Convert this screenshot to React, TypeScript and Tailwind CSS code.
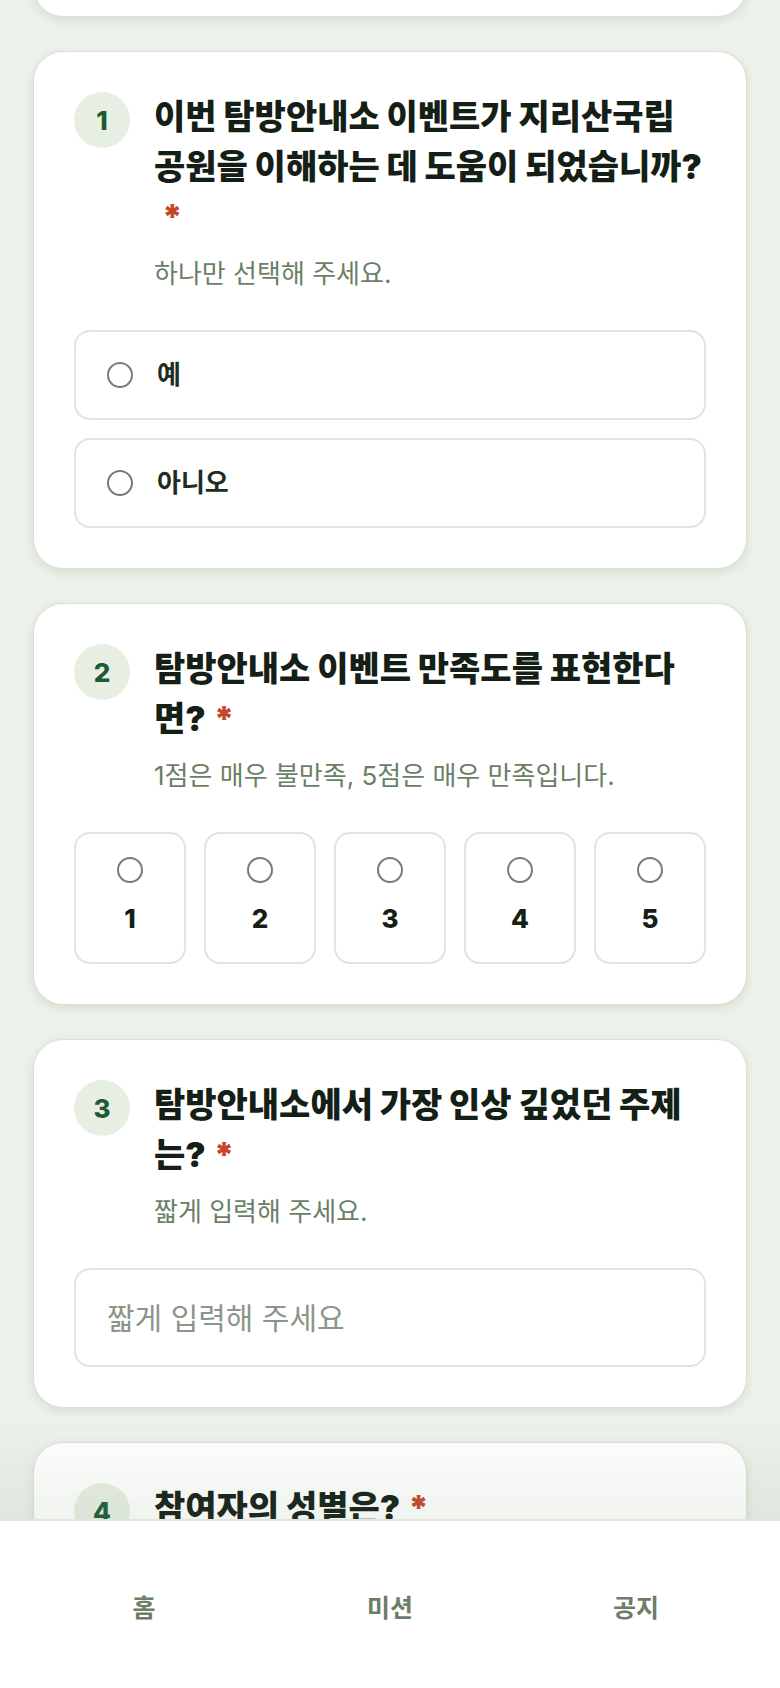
import React from 'react';

const font = "font-['Inter','Noto_Sans_CJK_KR',sans-serif]";

const Radio = () => (
  <span className="block w-[26px] h-[26px] shrink-0 rounded-full border-2 border-[#7a7a7a] bg-white" />
);

type HeaderProps = { n: number; title: string; hint?: string };

const QuestionHeader = ({ n, title, hint }: HeaderProps) => (
  <div className="flex items-start gap-6">
    <div className="w-14 h-14 shrink-0 rounded-full bg-[#e7efe3] flex items-center justify-center text-[26px] font-extrabold text-[#1e5b35]">
      {n}
    </div>
    <div className="flex-1 min-w-0">
      <h2 className="max-w-[548px] text-[34px] leading-[50px] font-black text-[#142016]">
        {title}
        <wbr />
        <span className="inline-block ml-2 text-[#c4462b]">*</span>
      </h2>
      {hint && <p className="mt-[15px] text-[26px] leading-[33px] text-[#6b7f66]">{hint}</p>}
    </div>
  </div>
);

const Card = ({ children }: { children: React.ReactNode }) => (
  <section className="rounded-[30px] border border-[#d8e2d2] bg-white p-10 shadow-[0_3px_8px_rgba(110,140,100,0.18)]">
    {children}
  </section>
);

const Option = ({ label }: { label: string }) => (
  <label className="h-[90px] rounded-2xl border-2 border-[#dfe6d8] flex items-center gap-6 px-[31px]">
    <Radio />
    <span className="text-[26px] leading-[36px] font-bold text-[#1f2d1f]">{label}</span>
  </label>
);

export default function App() {
  return (
    <div className={`relative h-[1688px] overflow-hidden bg-[#ecf1ea] ${font}`}>
      <div className="flex flex-col gap-[34px] px-[33px]">
        <div className="-mt-[83px] h-[100px] rounded-[30px] border border-[#d8e2d2] bg-white shadow-[0_3px_8px_rgba(110,140,100,0.18)]" />

        <Card>
          <QuestionHeader n={1} title="이번 탐방안내소 이벤트가 지리산국립공원을 이해하는 데 도움이 되었습니까?" hint="하나만 선택해 주세요." />
          <div className="mt-10 flex flex-col gap-[18px]">
            <Option label="예" />
            <Option label="아니오" />
          </div>
        </Card>

        <Card>
          <QuestionHeader n={2} title="탐방안내소 이벤트 만족도를 표현한다면?" hint="1점은 매우 불만족, 5점은 매우 만족입니다." />
          <div className="mt-10 grid grid-cols-5 gap-[18px]">
            {[1, 2, 3, 4, 5].map((s) => (
              <label
                key={s}
                className="rounded-2xl border-2 border-[#dfe6d8] flex flex-col items-center pt-[23px] pb-[27px] gap-[20px]"
              >
                <Radio />
                <span className="text-[26px] leading-[32px] font-extrabold text-[#142016]">{s}</span>
              </label>
            ))}
          </div>
        </Card>

        <Card>
          <QuestionHeader n={3} title="탐방안내소에서 가장 인상 깊었던 주제는?" hint="짧게 입력해 주세요." />
          <input
            type="text"
            placeholder="짧게 입력해 주세요"
            className="mt-10 block w-full h-[99px] rounded-2xl border-2 border-[#dfe6d8] px-[31px] text-[30px] text-[#1f2d1f] placeholder:text-[#8b9589] outline-none"
          />
        </Card>

        <Card>
          <QuestionHeader n={4} title="참여자의 성별은?" />
          <div className="h-[200px]" />
        </Card>
      </div>

      <div className="pointer-events-none absolute inset-x-0 bottom-[169px] h-[100px] bg-linear-to-b from-transparent to-[#6f8a6c]/10" />

      <nav className="absolute inset-x-0 bottom-0 h-[169px] border-t-2 border-[#dfe8da] bg-white grid grid-cols-3 px-[21px]">
        {['홈', '미션', '공지'].map((t) => (
          <a key={t} className="flex justify-center pt-[71px] text-[25px] leading-[32px] font-bold text-[#6c7e68]">
            {t}
          </a>
        ))}
      </nav>
    </div>
  );
}
